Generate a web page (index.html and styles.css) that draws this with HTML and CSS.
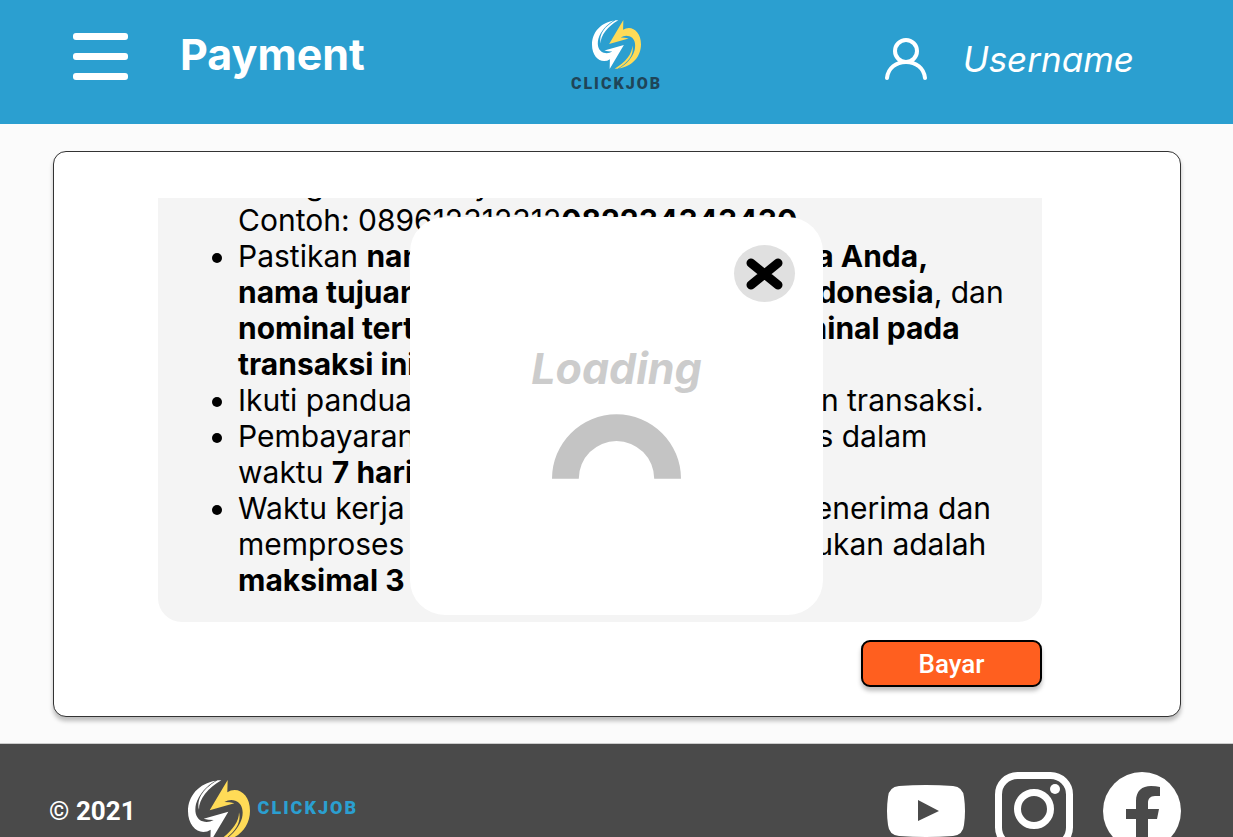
FILE: index.html
```html
<!DOCTYPE html>
<html lang="id">
<head>
  <meta charset="UTF-8" />
  <title>ClickJob | Payment</title>
  <meta name="viewport" content="width=device-width, initial-scale=1.0" />
  <link rel="stylesheet" href="styles.css">
</head>
<body>

  <svg class="sprite" aria-hidden="true">
    <symbol id="logo" viewBox="0 0 186 186">
      <g fill="#ffdb57">
        <path d="M119 0L65 91L139 70Q126 66 109 66Q125 57 142 62C160 68 168 88 162 114C153 144 130 169 103 184C152 176 186 140 186 92C186 54 164 30 140 30Q128 30 118 37Z" />
        <path d="M153 97C154 128 125 163 86 185L97 185C135 164 162 132 153 97Z" />
      </g>
      <g fill="#fff" transform="rotate(180 93 93)">
        <path d="M119 0L65 91L139 70Q126 66 109 66Q125 57 142 62C160 68 168 88 162 114C153 144 130 169 103 184C152 176 186 140 186 92C186 54 164 30 140 30Q128 30 118 37Z" />
        <path d="M153 97C154 128 125 163 86 185L97 185C135 164 162 132 153 97Z" />
      </g>
    </symbol>
  </svg>

  <header class="header">
    <div class="header-left">
      <button class="icon-btn" aria-label="Menu">
        <svg width="55" height="47" viewBox="0 0 55 47" fill="#fff">
          <rect width="55" height="7" rx="3" />
          <rect y="20" width="55" height="7" rx="3" />
          <rect y="40" width="55" height="7" rx="3" />
        </svg>
      </button>
      <h1>Payment</h1>
    </div>
    <a class="brand" href="#">
      <svg width="49" height="49"><use href="#logo" /></svg>
      <span>CLICKJOB</span>
    </a>
    <a class="user" href="#">
      <svg width="42" height="43" viewBox="0 0 42 43" fill="none" stroke="#fff" stroke-width="4" stroke-linecap="round">
        <circle cx="21" cy="13" r="11" />
        <path d="M2 40C3 30 11 24 21 24S39 30 40 40" />
      </svg>
      <span>Username</span>
    </a>
  </header>

  <main class="main">
    <div class="card">
      <div class="panel">
        <ul>
          <li>bilangan berikut yaitu:<br>Contoh: 089612312312<b>082234343430</b></li>
          <li>Pastikan <b>nama pengirim harus atas nama Anda,<br>nama tujuan transfer adalah ClickJob Indonesia</b>, dan<br><b>nominal tertera harus sama dengan nominal pada<br>transaksi ini.</b></li>
          <li>Ikuti panduan di atas untuk menyelesaikan transaksi.</li>
          <li>Pembayaran akan ditutup secara otomatis dalam<br>waktu <b>7 hari</b>.</li>
          <li>Waktu kerja yang diperlukan tim untuk menerima dan<br>memproses pembayaran yang baru dilakukan adalah<br><b>maksimal 3 hari kerja.</b></li>
        </ul>
      </div>
      <button class="pay-btn">Bayar</button>
    </div>
  </main>

  <footer class="footer">
    <span class="copy">© 2021</span>
    <a class="footer-brand" href="#">
      <svg width="62" height="62"><use href="#logo" /></svg>
      <span>CLICKJOB</span>
    </a>
    <div class="social">
      <a href="#" aria-label="YouTube">
        <svg width="78" height="78" viewBox="0 0 78 78">
          <path fill="#fff" fill-rule="evenodd" d="M12 14Q39 12 66 14Q76 15 77 25Q79 39 77 53Q76 63 66 64Q39 66 12 64Q2 63 1 53Q-1 39 1 25Q2 15 12 14ZM31 28V49L52 39Z" />
        </svg>
      </a>
      <a href="#" aria-label="Instagram">
        <svg width="78" height="78" viewBox="0 0 78 78" fill="none" stroke="#fff" stroke-width="7">
          <rect x="3.500" y="3.500" width="71" height="71" rx="19" />
          <circle cx="39" cy="37" r="16.500" />
          <circle cx="60" cy="17" r="5" fill="#fff" stroke="none" />
        </svg>
      </a>
      <a href="#" aria-label="Facebook">
        <svg width="78" height="78" viewBox="0 0 78 78">
          <circle cx="39" cy="39" r="39" fill="#fff" />
          <path fill="#4a4a4a" d="M33 78V47H23V37H33V29C33 19 39 14 48 14Q53 14 57 15V24H52C47 24 45 27 45 31V37H56L54 47H45V78Z" />
        </svg>
      </a>
    </div>
  </footer>

  <div class="overlay">
    <div class="modal" role="dialog" aria-label="Loading">
      <button class="close-btn" aria-label="Tutup">
        <svg width="37" height="32" viewBox="0 0 37 32" stroke="#000" stroke-width="9" stroke-linecap="round">
          <path d="M5 5L32 27M32 5L5 27" />
        </svg>
      </button>
      <p>Loading</p>
      <svg class="spinner" width="129" height="65" viewBox="0 0 130 65">
        <path fill="#c4c4c4" d="M0 65A65 65 0 0 1 130 65H103A38 38 0 0 0 27 65Z" />
      </svg>
    </div>
  </div>

</body>
</html>
```
FILE: styles.css
```css
* {
  box-sizing: border-box;
}
body {
  margin: 0;
  height: 100vh;
  overflow: hidden;
  background: #fbfbfb;
  font-family: Inter, "Liberation Sans", sans-serif;
}
a {
  color: inherit;
  text-decoration: none;
}
button {
  cursor: pointer;
}
svg {
  display: block;
}
.sprite {
  position: absolute;
  width: 0;
  height: 0;
}

/* header */
.header {
  display: grid;
  grid-template-columns: 1fr auto 1fr;
  align-items: center;
  height: 124px;
  padding: 0 73px 12px;
  background: #2b9fd0;
  color: #fff;
}
.header-left {
  display: flex;
  align-items: center;
  gap: 52px;
}
.icon-btn {
  padding: 0;
  border: 0;
  background: none;
}
h1 {
  margin: 0;
  padding-bottom: 4px;
  font-size: 43px;
  line-height: 52px;
}
.brand {
  display: flex;
  flex-direction: column;
  align-items: center;
  gap: 6px;
  color: #1f4558;
  font: 900 16px/18px Roboto, sans-serif;
  letter-spacing: 2px;
}
.user {
  display: flex;
  align-items: center;
  justify-content: flex-end;
  gap: 36px;
  padding: 6px 26px 0 0;
  font-size: 35px;
  font-style: italic;
}

/* content */
.main {
  padding: 27px 52px 26px 53px;
}
.card {
  padding: 46px 138px 29px 104px;
  background: #fff;
  border: 1px solid #333;
  border-radius: 13px;
  box-shadow: 0 4px 4px rgba(0,0,0,0.25);
}
.panel {
  display: flex;
  flex-direction: column;
  justify-content: flex-end;
  height: 424px;
  padding-bottom: 24px;
  overflow: hidden;
  background: #f4f4f4;
  border-radius: 0 0 24px 24px;
}
.panel ul {
  margin: 0;
  padding-left: 80px;
  font-size: 30px;
  line-height: 36px;
  white-space: nowrap;
}
.pay-btn {
  display: block;
  width: 181px;
  height: 47px;
  margin: 18px 0 0 auto;
  padding: 0;
  border: 2px solid #000;
  border-radius: 9px;
  background: #ff5f1f;
  box-shadow: 0 4px 4px rgba(0,0,0,0.25);
  color: #fff;
  font: 500 26px/30px Roboto, sans-serif;
}

/* footer */
.footer {
  display: flex;
  align-items: center;
  padding: 28px 52px 28px 49px;
  border-top: 1px solid #ccc;
  background: #4a4a4a;
  color: #fff;
}
.copy {
  font: 700 26px/30px Roboto, sans-serif;
}
.footer-brand {
  display: flex;
  align-items: center;
  gap: 8px;
  margin-left: 52px;
  color: #2b9fd0;
  font: 900 18px/24px Roboto, sans-serif;
  letter-spacing: 2px;
}
.footer-brand span {
  padding-bottom: 6px;
}
.social {
  display: flex;
  gap: 30px;
  margin-left: auto;
}

/* loading popup */
.overlay {
  position: fixed;
  inset: 0;
  display: flex;
  align-items: center;
  justify-content: center;
  padding-bottom: 5px;
}
.modal {
  display: flex;
  flex-direction: column;
  align-items: center;
  width: 413px;
  height: 398px;
  padding: 28px;
  background: #fff;
  border-radius: 35px;
}
.close-btn {
  display: flex;
  align-items: center;
  justify-content: center;
  align-self: flex-end;
  width: 61px;
  height: 57px;
  padding: 0;
  border: 0;
  border-radius: 50%;
  background: #e0e0e0;
}
.modal p {
  margin: 40px 0 20px;
  color: #ccc;
  font-size: 43px;
  font-style: italic;
  font-weight: 700;
  line-height: 52px;
}
```
